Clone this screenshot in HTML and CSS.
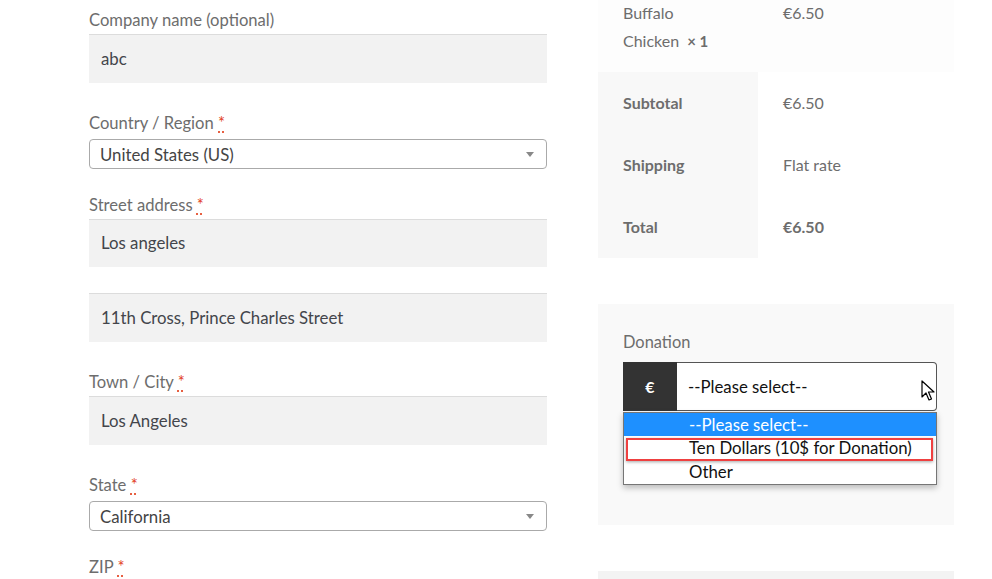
FILE: index.html
```html
<!DOCTYPE html>
<html lang="en">
<head>
<meta charset="utf-8">
<title>Checkout</title>
<link rel="stylesheet" href="styles.css">
</head>
<body>
<div class="page">
  <div class="billing">
    <div class="field">
      <label class="label">Company name (optional)</label>
      <div class="input">abc</div>
    </div>
    <div class="field field-select">
      <label class="label">Country / Region <abbr class="req">*</abbr></label>
      <div class="select"><span>United States (US)</span><span class="arrow"></span></div>
    </div>
    <div class="field field-addr">
      <label class="label">Street address <abbr class="req">*</abbr></label>
      <div class="input">Los angeles</div>
      <div class="input input-second">11th Cross, Prince Charles Street</div>
    </div>
    <div class="field">
      <label class="label">Town / City <abbr class="req">*</abbr></label>
      <div class="input">Los Angeles</div>
    </div>
    <div class="field field-select">
      <label class="label">State <abbr class="req">*</abbr></label>
      <div class="select"><span>California</span><span class="arrow"></span></div>
    </div>
    <div class="field field-last">
      <label class="label">ZIP <abbr class="req">*</abbr></label>
    </div>
  </div>

  <div class="sidebar">
    <div class="item-box">
      <div class="item-name">Buffalo<br>Chicken <strong class="qty">×&nbsp;1</strong></div>
      <div class="item-price">€6.50</div>
    </div>
    <div class="totals">
      <div class="row"><div class="th">Subtotal</div><div class="td">€6.50</div></div>
      <div class="row"><div class="th">Shipping</div><div class="td">Flat rate</div></div>
      <div class="row"><div class="th">Total</div><div class="td strong">€6.50</div></div>
    </div>

    <div class="donation">
      <div class="don-label">Donation</div>
      <div class="don-group">
        <div class="currency">€</div>
        <div class="don-select">
          <span>--Please select--</span>
          <svg class="cursor" width="14" height="22" viewBox="0 0 14 22"><path d="M1 1 L1 17 L5 13 L8 20 L10.5 19 L7.5 12 L13 12 Z" fill="#fff" stroke="#000" stroke-width="1.2" stroke-linejoin="round"/></svg>
        </div>
        <ul class="dropdown">
          <li class="opt active">--Please select--</li>
          <li class="opt marked">Ten Dollars (10$ for Donation)</li>
          <li class="opt">Other</li>
        </ul>
      </div>
    </div>

    <div class="next-box"></div>
  </div>
</div>
</body>
</html>
```

FILE: styles.css
```css
* { box-sizing: border-box; }
html, body { margin: 0; padding: 0; background: #fff; }
body {
  font-family: Lato, "Noto Sans", sans-serif;
  font-size: 16px;
  color: #6d6d6d;
  overflow: hidden;
  height: 579px;
}
.page {
  display: flex;
  gap: 51px;
  padding-left: 89px;
  height: 579px;
  overflow: hidden;
}
.billing {
  width: 458px;
  padding-top: 7px;
}
.field { margin-bottom: 27px; }
.field-select { margin-bottom: 23px; }
.field-last { margin-bottom: 0; }
.label {
  display: block;
  line-height: 26px;
  font-size: 16.6px;
  color: #6d6d6d;
}
.req {
  color: #e2401c;
  text-decoration: underline dotted;
  text-underline-offset: 3px;
  border: 0;
  cursor: help;
}
.input {
  margin-top: 1px;
  height: 49px;
  background: #f2f2f2;
  border-top: 1px solid #dcdcdc;
  padding: 0 12px 2px;
  display: flex;
  align-items: center;
  color: #43454b;
  font-size: 16.8px;
}
.field-addr .input { height: 48px; }
.input-second { margin-top: 26px; height: 49px !important; }
.select {
  margin-top: 3px;
  height: 30px;
  border: 1px solid #aaa;
  border-radius: 4px;
  padding: 0 10px;
  display: flex;
  align-items: center;
  justify-content: space-between;
  color: #444;
  font-size: 16.8px;
}
.arrow {
  width: 0; height: 0;
  border-left: 4px solid transparent;
  border-right: 4px solid transparent;
  border-top: 5px solid #888;
  margin-right: 2px;
}

.sidebar { width: 356px; }
.item-box {
  background: #fdfdfd;
  height: 72px;
  display: flex;
  padding-left: 25px;
  line-height: 28px;
}
.item-name { width: 160px; margin-top: -1px; }
.item-price { margin-top: -1px; }
.qty { color: #6d6d6d; font-size: 15px; margin-left: 4px; }
.totals { display: flex; flex-direction: column; }
.row { display: flex; height: 62px; }
.th {
  width: 160px;
  background: #f8f8f8;
  padding: 0 0 2px 25px;
  font-weight: 700;
  display: flex; align-items: center;
}
.td {
  padding: 0 0 2px 25px;
  display: flex; align-items: center;
}
.td.strong { font-weight: 700; }

.donation {
  margin-top: 46px;
  height: 221px;
  background: #f9f9f9;
  padding: 25px 17px 0 25px;
}
.don-label { line-height: 26px; font-size: 16.4px; }
.don-group {
  position: relative;
  margin-top: 7px;
  display: flex;
  height: 49px;
}
.currency {
  width: 54px;
  background: #333;
  color: #fff;
  font-weight: 700;
  display: flex; align-items: center; justify-content: center;
}
.don-select {
  flex: 1;
  background: #fff;
  border: 1px solid #555;
  border-left: 0;
  border-radius: 0 4px 4px 0;
  padding-left: 11px;
  display: flex; align-items: center;
  color: #111;
  font-size: 16.8px;
  position: relative;
}
.cursor { position: absolute; right: 1px; top: 17px; }
.dropdown {
  position: absolute;
  left: 0; top: 50px;
  width: 314px;
  margin: 0; padding: 0;
  list-style: none;
  background: #fff;
  border: 1px solid #767676;
  box-shadow: 0 3px 6px rgba(0,0,0,0.25);
}
.opt {
  height: 24px;
  line-height: 24px;
  padding-left: 65px;
  color: #111;
  font-size: 16.8px;
  position: relative;
}
.opt.active { background: #1e90ff; color: #fff; height: 23px; line-height: 23px; }
.opt.marked::after {
  content: "";
  position: absolute;
  left: 2px; right: 3px; top: 2px; bottom: -1px;
  border: 2px solid #ef4040;
  box-shadow: 0 1px 3px rgba(0,0,0,0.35);
}
.next-box {
  margin-top: 46px;
  height: 8px;
  background: #f3f3f3;
}
```
